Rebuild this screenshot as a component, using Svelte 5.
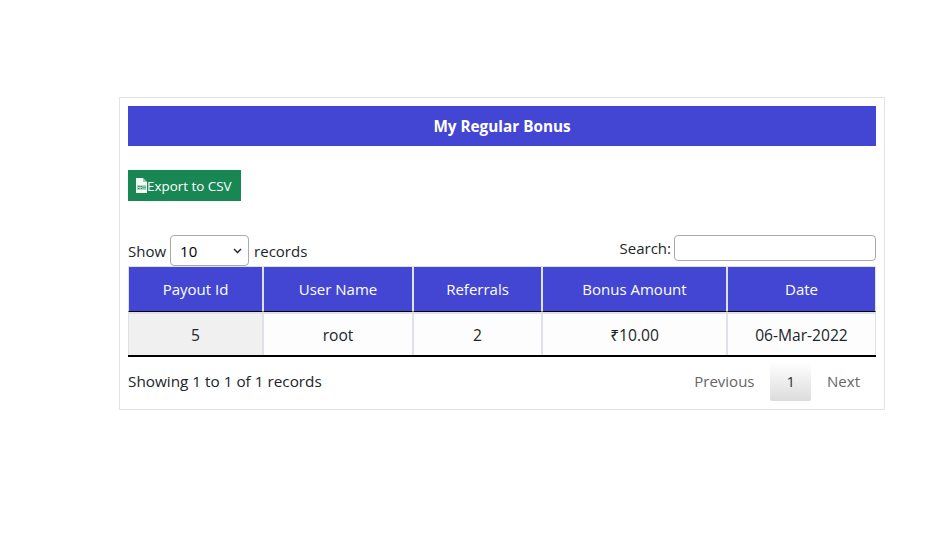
<script>
  let columns = [
    { label: "Payout Id", width: 135 },
    { label: "User Name", width: 150 },
    { label: "Referrals", width: 129 },
    { label: "Bonus Amount", width: 185 },
    { label: "Date", width: 149 },
  ];
  let rows = [["5", "root", "2", "₹10.00", "06-Mar-2022"]];
</script>

<div class="card">
  <h1 class="title">My Regular Bonus</h1>

  <button class="export">
    <svg width="11" height="15" viewBox="0 0 11 15">
      <path d="M0 0H7L11 4V15H0Z" fill="#f6faf4" />
      <path d="M7 0V4H11Z" fill="#1a8754" opacity="0.4" />
      <rect x="1" y="7" width="9" height="5" fill="#a9d6c0" />
      <path d="M2 8.5H3.5M2 10.5H3.5M4.5 8.5H6M5 10.5H6M7 8.5V10.5M9 8.5V10.5" stroke="#1a7a50" stroke-width="0.8" />
    </svg>Export to CSV
  </button>

  <div class="controls">
    <label class="length">
      Show
      <select>
        <option>10</option>
        <option>25</option>
        <option>50</option>
      </select>
      records
    </label>
    <label class="search">Search: <input type="text" /></label>
  </div>

  <table>
    <thead>
      <tr>
        {#each columns as col}
          <th style="width: {col.width}px">{col.label}</th>
        {/each}
      </tr>
    </thead>
    <tbody>
      {#each rows as row}
        <tr>
          {#each row as cell, i}
            <td class:sorted={i === 0}>{cell}</td>
          {/each}
        </tr>
      {/each}
    </tbody>
  </table>

  <div class="footer">
    <div class="info">Showing 1 to 1 of 1 records</div>
    <div class="pager">
      <span class="page-link prev">Previous</span>
      <span class="page-link current">1</span>
      <span class="page-link">Next</span>
    </div>
  </div>
</div>

<style>
  :global(body) {
    font-family: "Open Sans", "Noto Sans", sans-serif;
    font-size: 15px;
    color: #212529;
    background: #fff;
  }

  .card {
    box-sizing: border-box;
    width: 766px;
    height: 313px;
    margin: 97px 0 0 119px;
    padding: 8px;
    border: 1px solid #e3e3e3;
  }

  .title {
    margin: 0;
    height: 40px;
    line-height: 40px;
    background: #4346d3;
    color: #fff;
    font-size: 15.3px;
    font-weight: 700;
    text-align: center;
  }

  .export {
    display: flex;
    align-items: center;
    height: 31px;
    margin-top: 24px;
    padding: 0 9px 0 8px;
    border: 0;
    background: #198754;
    color: #fff;
    font: inherit;
    font-size: 13.4px;
  }

  .controls {
    display: flex;
    justify-content: space-between;
    align-items: flex-start;
    height: 31px;
    margin-top: 34px;
  }

  .length {
    display: flex;
    align-items: center;
    gap: 4px;
    height: 31px;
  }

  select {
    appearance: none;
    width: 79px;
    height: 31px;
    margin-right: 1px;
    padding: 0 4px 0 9px;
    border: 1px solid #aaa;
    border-radius: 4px;
    background: #fff url("data:image/svg+xml,%3Csvg xmlns='http://www.w3.org/2000/svg' width='9' height='6'%3E%3Cpath d='M1 1l3.5 3.5L8 1' fill='none' stroke='%23222' stroke-width='1.4'/%3E%3C/svg%3E") no-repeat right 6px center;
    color: #000;
    font: inherit;
    font-size: 15px;
  }

  .search {
    display: flex;
    align-items: center;
    gap: 3px;
    height: 26px;
  }

  input {
    box-sizing: border-box;
    width: 202px;
    height: 26px;
    border: 1px solid #aaa;
    border-radius: 4px;
  }

  table {
    width: 748px;
    table-layout: fixed;
    border-collapse: separate;
    border-spacing: 0;
    border-bottom: 2px solid #000;
  }

  th,
  td {
    box-sizing: border-box;
    border: 1px solid #dee2e6;
    text-align: center;
    font-weight: 400;
  }

  th {
    height: 46px;
    background: #4346d3;
    color: #fff;
    border-bottom: 1px solid #000;
  }

  td {
    height: 43px;
    border-bottom: 0;
    border-top-width: 2px;
    background: #fdfdfd;
    font-size: 15.6px;
  }

  td.sorted {
    background: #f0f0f0;
  }

  .footer {
    display: flex;
    justify-content: space-between;
    align-items: center;
    margin-top: 5px;
  }

  .info {
    margin-bottom: 2px;
    font-size: 15.3px;
  }

  .pager {
    display: flex;
  }

  .page-link {
    height: 39px;
    line-height: 39px;
    padding: 0 16px;
    color: #666;
  }

  .prev {
    padding-right: 15px;
  }

  .current {
    padding: 0 16px 0 17px;
    border-radius: 2px;
    background: linear-gradient(#fff, #dcdcdc);
    color: #333;
  }
</style>
